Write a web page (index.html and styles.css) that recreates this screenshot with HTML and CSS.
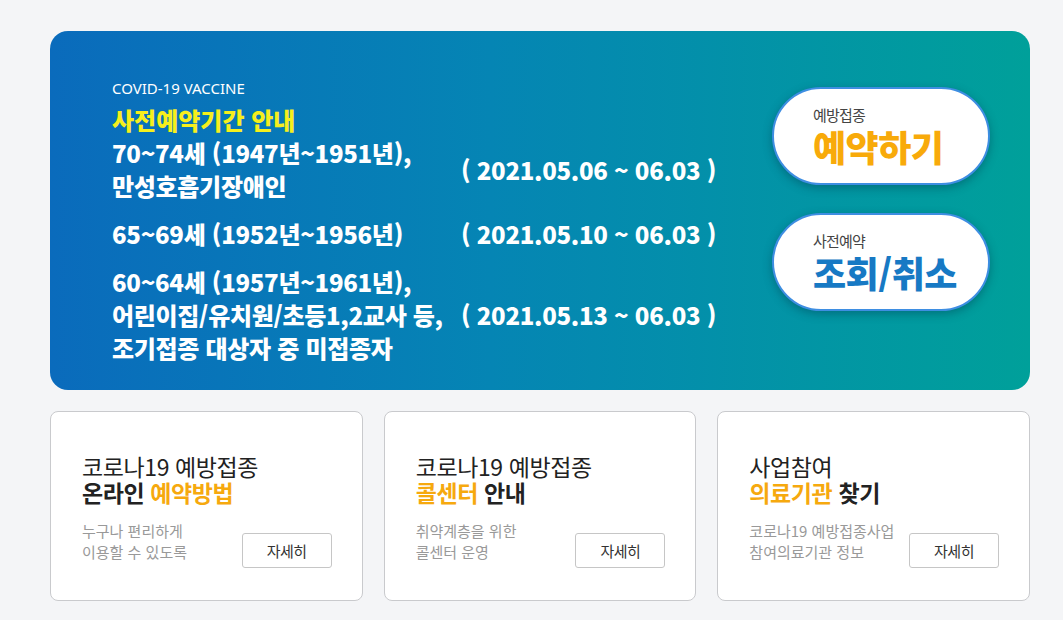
FILE: index.html
```html
<!DOCTYPE html>
<html lang="ko">
<head>
<meta charset="utf-8">
<title>COVID-19 VACCINE 사전예약</title>
<link rel="stylesheet" href="styles.css">
</head>
<body>
<div class="wrap">
  <section class="banner">
    <div class="info">
      <p class="eyebrow">COVID-19 VACCINE</p>
      <h1 class="title">사전예약기간 안내</h1>
      <div class="schedule">
        <div class="who">70~74세 (1947년~1951년),<br>만성호흡기장애인</div>
        <div class="when">( 2021.05.06 ~ 06.03 )</div>
        <div class="who">65~69세 (1952년~1956년)</div>
        <div class="when">( 2021.05.10 ~ 06.03 )</div>
        <div class="who">60~64세 (1957년~1961년),<br>어린이집/유치원/초등1,2교사 등,<br>조기접종 대상자 중 미접종자</div>
        <div class="when">( 2021.05.13 ~ 06.03 )</div>
      </div>
    </div>
    <div class="actions">
      <a class="pill" href="#">
        <span class="pill-sub">예방접종</span>
        <span class="pill-main orange">예약하기</span>
      </a>
      <a class="pill" href="#">
        <span class="pill-sub">사전예약</span>
        <span class="pill-main blue">조회/취소</span>
      </a>
    </div>
  </section>
  <section class="cards">
    <div class="card">
      <h2 class="card-title">코로나19 예방접종<br><b>온라인 <em>예약방법</em></b></h2>
      <div class="card-foot">
        <p class="card-desc">누구나 편리하게<br>이용할 수 있도록</p>
        <a class="more" href="#">자세히</a>
      </div>
    </div>
    <div class="card">
      <h2 class="card-title">코로나19 예방접종<br><b><em>콜센터</em> 안내</b></h2>
      <div class="card-foot">
        <p class="card-desc">취약계층을 위한<br>콜센터 운영</p>
        <a class="more" href="#">자세히</a>
      </div>
    </div>
    <div class="card">
      <h2 class="card-title">사업참여<br><b><em>의료기관</em> 찾기</b></h2>
      <div class="card-foot">
        <p class="card-desc">코로나19 예방접종사업<br>참여의료기관 정보</p>
        <a class="more" href="#">자세히</a>
      </div>
    </div>
  </section>
</div>
</body>
</html>
```

FILE: styles.css
```css
* { box-sizing: border-box; }
html, body { margin: 0; padding: 0; }
body {
  background: #f4f5f7;
  font-family: "Noto Sans CJK KR", "Noto Sans", sans-serif;
  color: #222;
}
.wrap {
  width: 980px;
  margin: 0 0 0 50px;
  padding-top: 31px;
}
.banner {
  height: 359px;
  border-radius: 18px;
  background: linear-gradient(90deg, #0a6bbc 0%, #0585b4 45%, #00a09a 100%);
  display: flex;
  justify-content: space-between;
  padding: 47px 40px 0 62px;
}
.eyebrow {
  margin: 0;
  font-family: "Noto Sans", "Open Sans", sans-serif;
  font-size: 15px;
  line-height: 20px;
  color: #fff;
}
.title {
  margin: 6px 0 0;
  font-size: 24px;
  line-height: 32px;
  font-weight: 900;
  color: #f6ef1c;
  letter-spacing: 0;
}
.schedule {
  display: grid;
  grid-template-columns: 349px auto;
  align-items: center;
  row-gap: 15px;
  color: #fff;
  font-size: 24px;
  line-height: 33px;
  font-weight: 900;
  letter-spacing: -0.3px;
}
.actions {
  display: flex;
  flex-direction: column;
  gap: 28px;
  padding-top: 9px;
}
.pill {
  display: flex;
  flex-direction: column;
  justify-content: center;
  width: 218px;
  height: 98px;
  padding-left: 39px;
  border: 2px solid #3e8ee2;
  border-radius: 49px;
  background: #fff;
  text-decoration: none;
  box-shadow: 0 3px 10px rgba(0, 40, 60, 0.35);
}
.pill-sub {
  font-size: 15px;
  line-height: 20px;
  color: #444;
  letter-spacing: -0.8px;
}
.pill-main {
  font-size: 36px;
  line-height: 42px;
  font-weight: 900;
  letter-spacing: -0.5px;
}
.orange { color: #f8aa0a; }
.blue { color: #1779c4; }

.cards {
  margin-top: 21px;
  display: grid;
  grid-template-columns: repeat(3, 1fr);
  column-gap: 21px;
}
.card {
  height: 190px;
  background: #fff;
  border: 1px solid #c9cacd;
  border-radius: 8px;
  padding: 41px 30px 0 31px;
}
.card-title {
  margin: 0;
  font-size: 23px;
  line-height: 26px;
  font-weight: 400;
  letter-spacing: -0.4px;
  color: #222;
}
.card-title b { font-weight: 700; }
.card-title em { font-style: normal; color: #f6a90e; }
.card-foot {
  display: flex;
  justify-content: space-between;
  align-items: flex-start;
  margin-top: 15px;
}
.card-desc {
  margin: 0;
  font-size: 15px;
  line-height: 21px;
  color: #999;
  letter-spacing: 0;
}
.more {
  margin-top: 13px;
  width: 90px;
  height: 35px;
  border: 1px solid #c6c6c6;
  border-radius: 3px;
  display: flex;
  align-items: center;
  justify-content: center;
  font-size: 15px;
  color: #333;
  text-decoration: none;
  letter-spacing: -0.5px;
}
```
